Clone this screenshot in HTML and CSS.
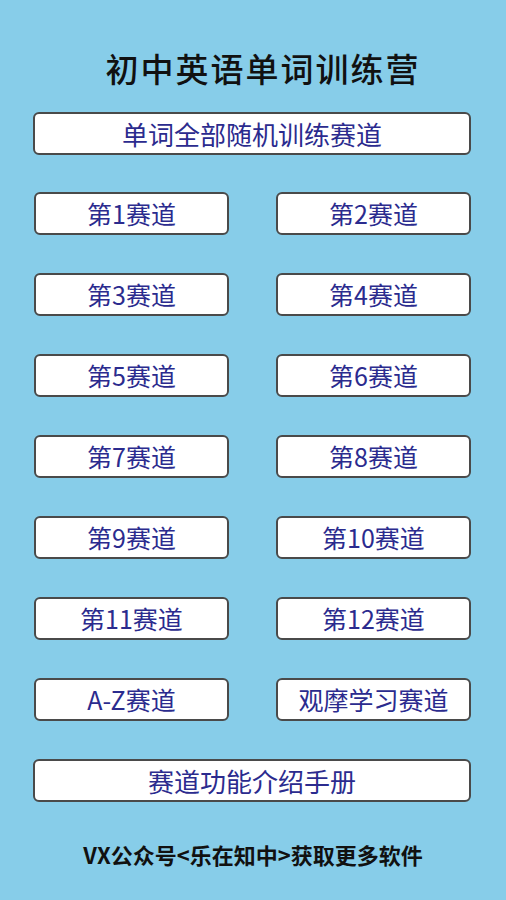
FILE: index.html
```html
<!DOCTYPE html>
<html lang="zh-CN">
<head>
    <meta charset="UTF-8">
    <meta name="viewport" content="width=device-width, initial-scale=1.0">
    <title>初中英语单词训练营</title>
    <link rel="stylesheet" href="styles.css">
</head>
<body>
    <div class="main">
        <h1 class="title">初中英语单词训练营</h1>
        <button class="btn wide">单词全部随机训练赛道</button>
        <div class="track-grid">
            <button class="btn">第1赛道</button>
            <button class="btn">第2赛道</button>
            <button class="btn">第3赛道</button>
            <button class="btn">第4赛道</button>
            <button class="btn">第5赛道</button>
            <button class="btn">第6赛道</button>
            <button class="btn">第7赛道</button>
            <button class="btn">第8赛道</button>
            <button class="btn">第9赛道</button>
            <button class="btn">第10赛道</button>
            <button class="btn">第11赛道</button>
            <button class="btn">第12赛道</button>
            <button class="btn">A-Z赛道</button>
            <button class="btn">观摩学习赛道</button>
        </div>
        <button class="btn wide">赛道功能介绍手册</button>
        <p class="footer">VX公众号&lt;乐在知中&gt;获取更多软件</p>
    </div>
</body>
</html>
```

FILE: styles.css
```css
body { margin: 0; background-color: #87cde9; font-family: "Noto Sans CJK SC", "Noto Sans", sans-serif; }
.main { display: flex; flex-direction: column; padding: 46px 35px 0 33px; height: 900px; box-sizing: border-box; }
.title { margin: 0 0 22px; font-size: 33px; line-height: 44px; font-weight: 500; text-align: center; color: #111; letter-spacing: 2px; padding-left: 22px; }
.btn { height: 43px; background: #fff; border: 2px solid #4a4a4a; border-radius: 6px; font-family: inherit; font-size: 25px; color: #2b2b8e; padding: 0; line-height: 1; }
.wide { width: 100%; font-size: 26px; }
.track-grid { display: grid; grid-template-columns: 195px 195px; justify-content: space-between; row-gap: 38px; margin: 37px 0 0 1px; }
.track-grid + .wide { margin-top: 38px; }
.footer { margin: 36px 0 0; text-align: center; font-size: 22px; font-weight: 700; color: #111; padding-left: 2px; }
```
